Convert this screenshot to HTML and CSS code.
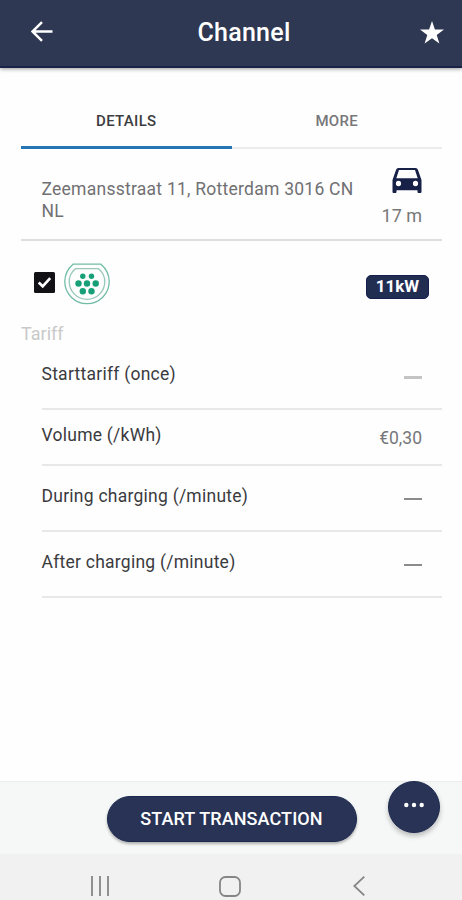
FILE: index.html
```html
<!DOCTYPE html>
<html lang="en">
<head>
<meta charset="utf-8">
<title>Channel</title>
<link rel="stylesheet" href="styles.css">
</head>
<body>
<header class="header">
  <svg class="back" width="22" height="22" viewBox="0 0 22 22"><path d="M11 1.200 1.500 10.500 11 19.800M2 10.500H21.500" fill="none" stroke="#fff" stroke-width="2.500"/></svg>
  <h1 class="title">Channel</h1>
  <svg class="star" width="24" height="23" viewBox="0 0 24 23"><path d="M12 0 14.900 8.500H24L16.700 13.900 19.400 22.500 12 17.300 4.600 22.500 7.300 13.900 0 8.500H9.100Z" fill="#fff"/></svg>
</header>
<main class="content">
  <nav class="tabs">
    <div class="tab active"><span>DETAILS</span></div>
    <div class="tab"><span>MORE</span></div>
  </nav>
  <section class="location">
    <p class="address">Zeemansstraat 11, Rotterdam 3016 CN<br>NL</p>
    <div class="distance">
      <svg width="30" height="25" viewBox="0 0 30 24" preserveAspectRatio="none"><path fill-rule="evenodd" fill="#172047" d="M6.500 0H23.500Q25.500 0 26 1.800L29.500 11.500V23Q29.500 24 28.500 24H26.500Q25.500 24 25.500 23V21.300H4.500V23Q4.500 24 3.500 24H1.500Q.5 24 .5 23V11.500L4 1.800Q4.500 0 6.500 0ZM7 2 4.300 9.800H25.700L23 2ZM6.500 12.200A2.600 2.600 0 1 0 6.500 17.400 2.600 2.600 0 1 0 6.500 12.200ZM23.500 12.200A2.600 2.600 0 1 0 23.500 17.400 2.600 2.600 0 1 0 23.500 12.200Z"/></svg>
      <span class="meters">17 m</span>
    </div>
  </section>
  <section class="connector">
    <svg class="check" width="21" height="21" viewBox="0 0 21 21"><rect width="21" height="21" rx="1.500" fill="#111116"/><path d="M4.700 10.500 8.700 14.300 16.200 6.200" fill="none" stroke="#fff" stroke-width="2.700"/></svg>
    <svg class="plug" width="46" height="42" viewBox="0 0 46 42">
      <g fill="none" stroke="#70bda6" stroke-width="1.300"><path d="M9 1.200H37C42 5.500 45.200 11.800 45.200 18.500A22.200 22.200 0 0 1 .8 18.500C.8 11.800 4 5.500 9 1.200Z"/><path stroke="#96c7b8" d="M11.500 5.700H34.500C38.500 9 40.800 13.500 40.800 18.500A17.800 17.800 0 0 1 5.200 18.500C5.200 13.500 7.500 9 11.500 5.700Z"/></g>
      <g fill="#17a077"><circle cx="18.800" cy="13.300" r="2.700"/><circle cx="27.500" cy="13.300" r="2.700"/><circle cx="14.500" cy="20.500" r="3.200"/><circle cx="23" cy="20.500" r="3.200"/><circle cx="31.700" cy="20.500" r="3.200"/><circle cx="18.800" cy="28.300" r="3.200"/><circle cx="27.500" cy="28.300" r="3.200"/></g>
    </svg>
    <span class="power">11kW</span>
  </section>
  <section class="tariff">
    <h2 class="tariff-title">Tariff</h2>
    <div class="row start"><span class="label">Starttariff (once)</span><i class="dash light"></i></div>
    <div class="row volume"><span class="label">Volume (/kWh)</span><span class="price">€0,30</span></div>
    <div class="row"><span class="label">During charging (/minute)</span><i class="dash"></i></div>
    <div class="row"><span class="label">After charging (/minute)</span><i class="dash"></i></div>
  </section>
</main>
<footer class="actions">
  <button class="start-button"><span>START TRANSACTION</span></button>
  <button class="more-button" aria-label="More"><svg width="22" height="6" viewBox="0 0 22 6" fill="#fff"><circle cx="3.300" cy="3" r="2.200"/><circle cx="11" cy="3" r="2.200"/><circle cx="18.700" cy="3" r="2.200"/></svg></button>
</footer>
<div class="system">
  <svg width="20" height="20" viewBox="0 0 20 20"><path d="M2 0V20M10 0V20M18 0V20" stroke="#858585" stroke-width="1.800"/></svg>
  <svg class="home" width="22" height="21" viewBox="0 0 22 21"><rect x="1" y="1" width="20" height="19" rx="5.500" fill="none" stroke="#858585" stroke-width="1.800"/></svg>
  <svg class="previous" width="12" height="20" viewBox="0 0 12 20"><path d="M11.300 .7 1.300 10 11.300 19.300" fill="none" stroke="#858585" stroke-width="1.800"/></svg>
</div>
</body>
</html>
```

FILE: styles.css
```css
* { box-sizing: border-box; }
body {
  margin: 0;
  height: 900px;
  display: flex;
  flex-direction: column;
  overflow: hidden;
  background: #fefefe;
  font-family: Roboto, sans-serif;
}
svg { display: block; flex: none; }
h1, h2, p { margin: 0; }
.header {
  height: 68px;
  flex: none;
  display: flex;
  justify-content: space-between;
  padding: 21px 18px 0 31px;
  background: #2e3852;
  border-bottom: 2px solid #1b2447;
  box-shadow: 0 1px 4px rgba(0, 0, 0, .4);
}
.title {
  margin: -3px 0 0 15px;
  font-size: 25px;
  line-height: 30px;
  font-weight: 500;
  letter-spacing: .25px;
  color: #fff;
}
.content { flex: 1; padding: 24px 20px 0 21px; }
.tabs { display: flex; height: 57px; }
.tab {
  flex: 1;
  display: flex;
  justify-content: center;
  padding-top: 19px;
  border-bottom: 2px solid #e9ebed;
  font-size: 15px;
  line-height: 20px;
  font-weight: 500;
  letter-spacing: .3px;
  color: #77777a;
}
.tab.active { border-bottom: 3px solid #2675b5; color: #3d3d40; }
.location {
  display: flex;
  justify-content: space-between;
  height: 92px;
  padding: 19px 20px 0 20.500px;
  border-bottom: 2px solid #dedede;
}
.address {
  padding-top: 11px;
  font-size: 17.500px;
  line-height: 21.500px;
  color: #707073;
  letter-spacing: .25px;
  white-space: nowrap;
}
.distance { display: flex; flex-direction: column; align-items: flex-end; }
.meters { margin-top: 12px; font-size: 18px; line-height: 21px; color: #777; }
.connector { display: flex; align-items: flex-start; height: 83px; padding: 22px 13px 0 13px; }
.check { margin-top: 9px; }
.plug { margin-left: 9px; }
.power {
  margin: 12px 0 0 auto;
  width: 63px;
  height: 24px;
  border: 1px solid #17204a;
  border-radius: 5px;
  background: #222d52;
  color: #fff;
  font-size: 17px;
  line-height: 21px;
  font-weight: 700;
  text-align: center;
}
.tariff-title { height: 20px; font-size: 18px; line-height: 20px; font-weight: 400; color: #c9c9c9; }
.row {
  display: flex;
  justify-content: space-between;
  align-items: center;
  height: 66px;
  margin-left: 21px;
  padding: 0 20px 4px 0;
  border-bottom: 2px solid #e8e8e8;
}
.row.start { padding-bottom: 5px; }
.row.volume { height: 56px; padding-bottom: 4px; }
.label { margin-left: -.5px; font-size: 17.500px; line-height: 22px; color: #3b3b3e; letter-spacing: .25px; }
.dash { width: 18px; height: 2px; margin-top: 5px; background: #8b8b8b; }
.dash.light { height: 3px; margin-top: 7px; background: #c4c4c4; }
.price { margin-top: 6px; font-size: 17.500px; line-height: 20px; color: #77777a; }
.actions {
  height: 73px;
  flex: none;
  display: flex;
  align-items: flex-start;
  padding: 0 22px 0 107px;
  border-top: 1px solid #ebedee;
  background: #f6f7f7;
}
button { border: 0; padding: 0; font-family: inherit; color: #fff; background: #283355; }
.start-button {
  width: 250px;
  height: 46px;
  margin-top: 14px;
  padding: 0 1px 2px 0;
  border: 1px solid #1c294f;
  border-radius: 23px;
  box-shadow: 0 2px 3px rgba(0, 0, 0, .3);
  font-size: 18px;
  font-weight: 500;
  letter-spacing: .1px;
}
.more-button {
  width: 52px;
  height: 52px;
  margin: -1px 0 0 auto;
  display: flex;
  align-items: center;
  justify-content: center;
  border: 1px solid #1c294f;
  border-radius: 50%;
  padding-bottom: 4px;
  box-shadow: 0 3px 5px rgba(0, 0, 0, .25);
}
.system {
  height: 46px;
  flex: none;
  display: flex;
  padding: 22px 0 0 90px;
  background: #f1f1f1;
}
.home { margin-left: 109px; }
.previous { margin-left: 112px; }
```
